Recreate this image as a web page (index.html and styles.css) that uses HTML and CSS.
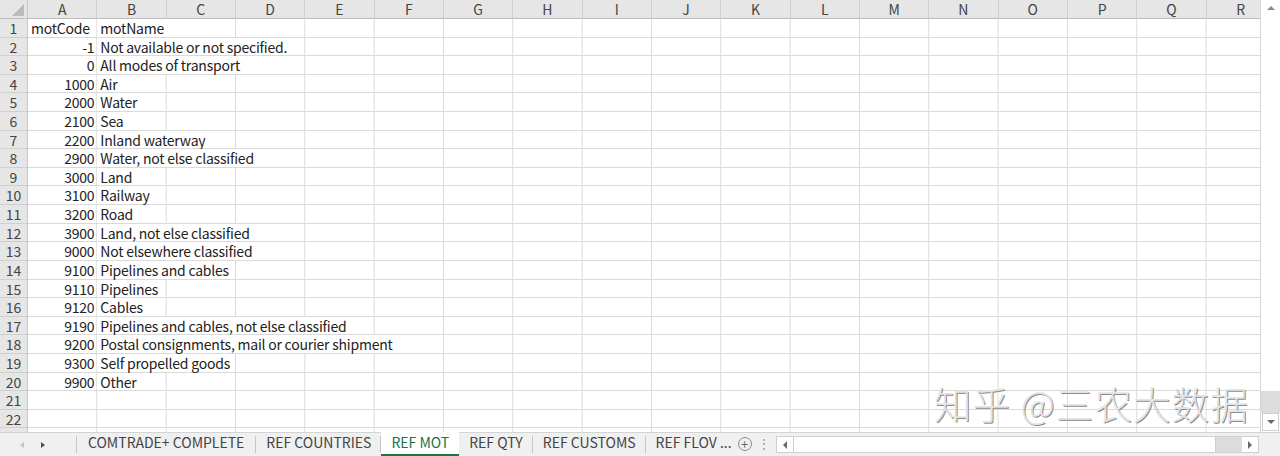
FILE: index.html
```html
<!DOCTYPE html>
<html lang="en">

<head>
    <meta charset="UTF-8">
    <title>REF MOT</title>
    <link rel="stylesheet" href="styles.css">
</head>

<body>
    <div class="app">
        <div class="main">
            <div class="sheet">
                <div class="col-heads">
                    <div class="corner"><span class="corner-tri"></span></div>
                    <div class="col-head">A</div>
                    <div class="col-head">B</div>
                    <div class="col-head">C</div>
                    <div class="col-head">D</div>
                    <div class="col-head">E</div>
                    <div class="col-head">F</div>
                    <div class="col-head">G</div>
                    <div class="col-head">H</div>
                    <div class="col-head">I</div>
                    <div class="col-head">J</div>
                    <div class="col-head">K</div>
                    <div class="col-head">L</div>
                    <div class="col-head">M</div>
                    <div class="col-head">N</div>
                    <div class="col-head">O</div>
                    <div class="col-head">P</div>
                    <div class="col-head">Q</div>
                    <div class="col-head">R</div>
                </div>
                <div class="sheet-body">
                    <div class="row-heads">
                        <div class="row-head">1</div>
                        <div class="row-head">2</div>
                        <div class="row-head">3</div>
                        <div class="row-head">4</div>
                        <div class="row-head">5</div>
                        <div class="row-head">6</div>
                        <div class="row-head">7</div>
                        <div class="row-head">8</div>
                        <div class="row-head">9</div>
                        <div class="row-head">10</div>
                        <div class="row-head">11</div>
                        <div class="row-head">12</div>
                        <div class="row-head">13</div>
                        <div class="row-head">14</div>
                        <div class="row-head">15</div>
                        <div class="row-head">16</div>
                        <div class="row-head">17</div>
                        <div class="row-head">18</div>
                        <div class="row-head">19</div>
                        <div class="row-head">20</div>
                        <div class="row-head">21</div>
                        <div class="row-head">22</div>
                    </div>
                    <div class="cells">
                        <div class="row"><span class="code text">motCode</span><span class="name">motName</span></div>
                        <div class="row"><span class="code">-1</span><span class="name">Not available or not specified.</span></div>
                        <div class="row"><span class="code">0</span><span class="name">All modes of transport</span></div>
                        <div class="row"><span class="code">1000</span><span class="name">Air</span></div>
                        <div class="row"><span class="code">2000</span><span class="name">Water</span></div>
                        <div class="row"><span class="code">2100</span><span class="name">Sea</span></div>
                        <div class="row"><span class="code">2200</span><span class="name">Inland waterway</span></div>
                        <div class="row"><span class="code">2900</span><span class="name">Water, not else classified</span></div>
                        <div class="row"><span class="code">3000</span><span class="name">Land</span></div>
                        <div class="row"><span class="code">3100</span><span class="name">Railway</span></div>
                        <div class="row"><span class="code">3200</span><span class="name">Road</span></div>
                        <div class="row"><span class="code">3900</span><span class="name">Land, not else classified</span></div>
                        <div class="row"><span class="code">9000</span><span class="name">Not elsewhere classified</span></div>
                        <div class="row"><span class="code">9100</span><span class="name">Pipelines and cables</span></div>
                        <div class="row"><span class="code">9110</span><span class="name">Pipelines</span></div>
                        <div class="row"><span class="code">9120</span><span class="name">Cables</span></div>
                        <div class="row"><span class="code">9190</span><span class="name">Pipelines and cables, not else classified</span></div>
                        <div class="row"><span class="code">9200</span><span class="name">Postal consignments, mail or courier shipment</span></div>
                        <div class="row"><span class="code">9300</span><span class="name">Self propelled goods</span></div>
                        <div class="row"><span class="code">9900</span><span class="name">Other</span></div>
                        <div class="row"></div>
                        <div class="row"></div>
                        <div class="row"></div>
                    </div>
                </div>
                <div class="watermark">知乎 @三农大数据</div>
            </div>
            <div class="vscroll">
                <div class="vbtn"><span class="arrow-up"></span></div>
                <div class="vthumb"></div>
                <div class="vtrack"></div>
                <div class="vbtn vbtn-down"><span class="arrow-down"></span></div>
            </div>
        </div>
        <div class="tabbar">
            <div class="tab-nav">
                <span class="nav-arrow nav-left"></span>
                <span class="nav-arrow nav-right"></span>
            </div>
            <div class="tabs">
                <div class="tab tab-first">COMTRADE+ COMPLETE</div>
                <div class="tab">REF COUNTRIES</div>
                <div class="tab tab-active">REF MOT</div>
                <div class="tab">REF QTY</div>
                <div class="tab">REF CUSTOMS</div>
                <div class="tab tab-last">REF FLOV ...</div>
            </div>
            <div class="tab-add">+</div>
            <div class="tab-dots">⋮</div>
            <div class="hscroll">
                <div class="hbtn"><span class="arrow-left"></span></div>
                <div class="hthumb"></div>
                <div class="htrack"></div>
                <div class="hbtn"><span class="arrow-right"></span></div>
            </div>
        </div>
    </div>
</body>

</html>
```

FILE: styles.css
```css
body {
    margin: 0;
    overflow: hidden;
    background-color: #ffffff;
    font-family: "Noto Sans CJK SC", "Noto Sans", sans-serif;
    font-size: 14px;
    color: #222222;
}

.app {
    width: 1280px;
    height: 456px;
    display: flex;
    flex-direction: column;
}

.main {
    height: 432px;
    display: flex;
}

/* sheet grid */

.sheet {
    position: relative;
    width: 1260px;
    overflow: hidden;
}

.col-heads {
    display: grid;
    grid-template-columns: 28px repeat(18, 69.33px);
    height: 19px;
    background-color: #e6e6e6;
    border-bottom: 1px solid #bdbdbd;
    box-sizing: border-box;
}

.corner {
    position: relative;
    border-right: 1px solid #c8c8c8;
}

.corner-tri {
    position: absolute;
    right: 3px;
    bottom: 3px;
    width: 0;
    height: 0;
    border-left: 12px solid transparent;
    border-bottom: 12px solid #bcbcbc;
}

.col-head {
    border-right: 1px solid #cfcfcf;
    text-align: center;
    line-height: 19px;
    color: #444444;
}

.sheet-body {
    display: flex;
}

.row-heads {
    width: 28px;
    height: 413px;
    flex: none;
    background-color: #e6e6e6;
    border-right: 1px solid #c8c8c8;
    box-sizing: border-box;
}

.row-head {
    height: 18.62px;
    padding-top: 1px;
    line-height: 17.62px;
    border-bottom: 1px solid #cfcfcf;
    box-sizing: border-box;
    text-align: center;
    color: #444444;
}

.cells {
    flex: 1;
    background-image: linear-gradient(to right, transparent 68.33px, #dadada 68.33px);
    background-size: 69.33px 100%;
    letter-spacing: -0.22px;
}

.row {
    display: flex;
    height: 18.62px;
    line-height: 17.62px;
    border-bottom: 1px solid #dadada;
    box-sizing: border-box;
    white-space: nowrap;
}

.code {
    width: 69.33px;
    flex: none;
    box-sizing: border-box;
    padding: 1px 3px 0 0;
    text-align: right;
}

.code.text {
    padding-left: 3px;
    text-align: left;
}

.name {
    padding: 1px 3px 0 3px;
    background-color: #ffffff;
}

.watermark {
    position: absolute;
    left: 934px;
    top: 380px;
    font-size: 37.5px;
    line-height: 46px;
    letter-spacing: 1.1px;
    font-weight: 300;
    color: #e4e4e4;
    text-shadow: 1px 1px 0 #8c8c8c;
    white-space: pre;
}

/* vertical scrollbar */

.vscroll {
    width: 20px;
    flex: none;
    display: flex;
    flex-direction: column;
    border-left: 1px solid #d6d6d6;
    box-sizing: border-box;
    background-color: #ffffff;
}

.vbtn {
    height: 16px;
    display: flex;
    align-items: center;
    justify-content: center;
}

.vbtn-down {
    border: 1px solid #cfcfcf;
    margin: 0 1px 1px 1px;
    background-color: #ffffff;
}

.vthumb {
    flex: 1;
}

.vtrack {
    height: 22px;
    background-color: #dcdcdc;
}

.arrow-up {
    border-left: 4px solid transparent;
    border-right: 4px solid transparent;
    border-bottom: 4px solid #8a8a8a;
}

.arrow-down {
    border-left: 4px solid transparent;
    border-right: 4px solid transparent;
    border-top: 4px solid #6a6a6a;
}

/* sheet tabs */

.tabbar {
    height: 24px;
    display: flex;
    align-items: stretch;
    background-color: #f0f0f0;
    border-top: 1px solid #d4d4d4;
    box-sizing: border-box;
    font-size: 14px;
    color: #444444;
    white-space: nowrap;
}

.tab-nav {
    width: 77px;
    flex: none;
    display: flex;
    align-items: center;
    gap: 17px;
    padding-left: 20px;
    box-sizing: border-box;
    border-right: 1px solid #c6c6c6;
    margin: 3px 0;
}

.nav-arrow {
    width: 0;
    height: 0;
    border-top: 3.5px solid transparent;
    border-bottom: 3.5px solid transparent;
}

.nav-left {
    border-right: 4px solid #c4c4c4;
}

.nav-right {
    border-left: 4px solid #2f5e45;
}

.tabs {
    display: flex;
    flex: none;
}

.tab {
    padding: 0 10px;
    line-height: 19px;
    position: relative;
}

.tab-first {
    padding: 0 12px 0 11px;
}

.tab::after {
    content: "";
    position: absolute;
    right: 0;
    top: 3px;
    bottom: 3px;
    border-right: 1px solid #c6c6c6;
}

.tab-last::after,
.tab-active::after {
    display: none;
}

.tab-last {
    padding-right: 0;
}

.tab-active {
    background-color: #ffffff;
    color: #217346;
    border-bottom: 2px solid #217346;
    margin-top: -1px;
    line-height: 20px;
}

.tab-add {
    width: 14px;
    height: 14px;
    flex: none;
    margin: 4px 0 0 6px;
    border: 1px solid #8a8a8a;
    border-radius: 50%;
    box-sizing: border-box;
    font-size: 13px;
    line-height: 11px;
    text-align: center;
    color: #6a6a6a;
}

.tab-dots {
    width: 20px;
    flex: none;
    text-align: center;
    color: #a0a0a0;
    line-height: 20px;
    margin-left: 2px;
}

.hscroll {
    width: 481px;
    flex: none;
    display: flex;
    margin: 3px 0 3px auto;
    margin-right: 21px;
    border: 1px solid #cfcfcf;
    background-color: #ffffff;
}

.hbtn {
    width: 16px;
    display: flex;
    align-items: center;
    justify-content: center;
    background-color: #ffffff;
}

.hthumb {
    flex: 1;
    border-left: 1px solid #cfcfcf;
    border-right: 1px solid #cfcfcf;
}

.htrack {
    width: 26px;
    background-color: #dcdcdc;
}

.arrow-left {
    border-top: 4px solid transparent;
    border-bottom: 4px solid transparent;
    border-right: 4px solid #6a6a6a;
}

.arrow-right {
    border-top: 4px solid transparent;
    border-bottom: 4px solid transparent;
    border-left: 4px solid #6a6a6a;
}
```
